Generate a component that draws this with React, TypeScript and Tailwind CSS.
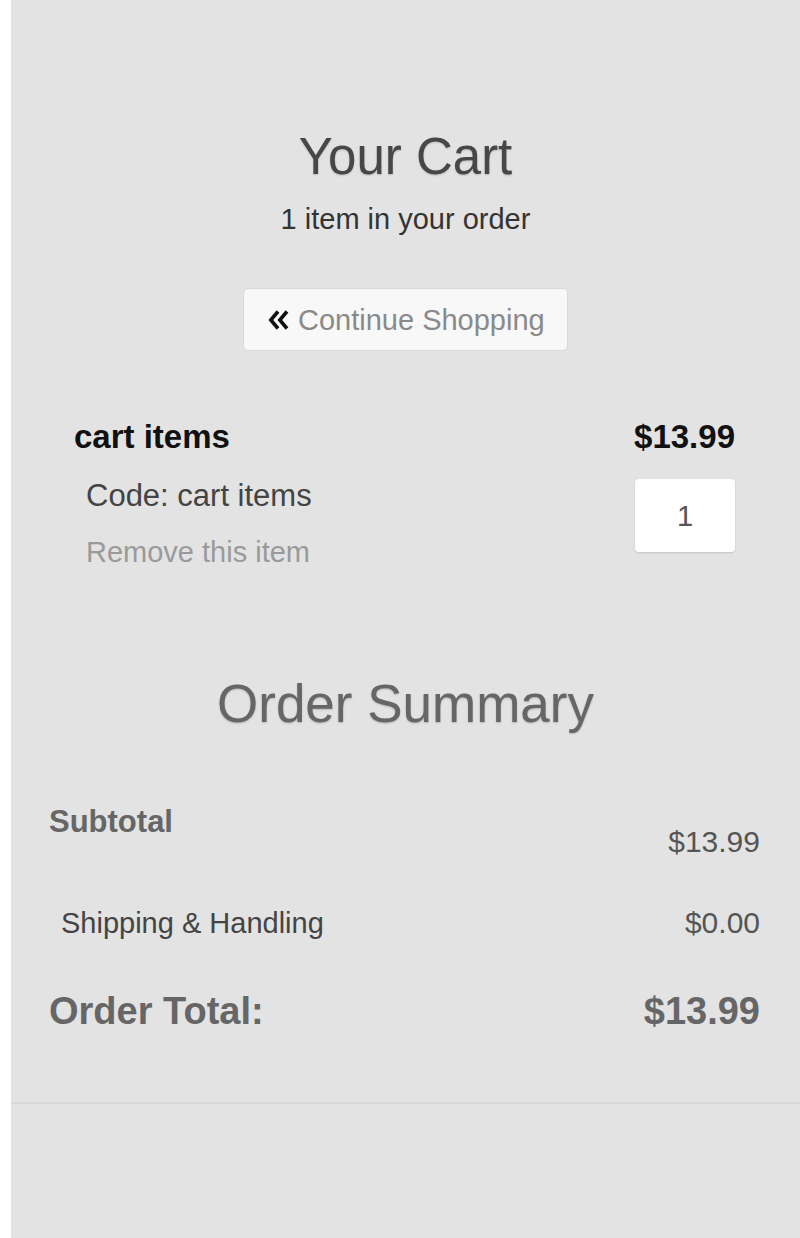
import React from "react";

const font = { fontFamily: '"Liberation Sans", Arial, sans-serif' };

function DoubleLeft() {
  return (
    <svg width="21" height="20" viewBox="0 0 21 20" className="shrink-0">
      <polyline points="10,1.5 2.8,10 10,18.5" fill="none" stroke="#111" strokeWidth="3.6" strokeLinejoin="miter" />
      <polyline points="19,1.5 11.8,10 19,18.5" fill="none" stroke="#111" strokeWidth="3.6" strokeLinejoin="miter" />
    </svg>
  );
}

export default function App() {
  return (
    <div className="min-h-[1238px] bg-white pl-[11px]" style={font}>
      <div className="min-h-[1238px] bg-[#e3e3e3] flex flex-col">
        <div className="pt-[128px] flex flex-col items-center">
          <h1 className="text-[51px] leading-[58px] text-[#474747] [text-shadow:0_1px_2px_rgba(0,0,0,0.18)]">Your Cart</h1>
          <p className="mt-[15px] text-[29px] leading-[36px] text-[#333]">1 item in your order</p>
          <button className="mt-[51px] w-[325px] h-[63px] bg-[#f8f8f8] border border-[#d9d9d9] rounded-[5px] flex items-center pl-[24px] gap-[9px]">
            <DoubleLeft />
            <span className="text-[29px] leading-[36px] text-[#8a8a8a]">Continue Shopping</span>
          </button>
        </div>

        <div className="mt-[67px] pl-[63px] pr-[65px] flex justify-between">
          <div className="flex flex-col">
            <div className="text-[33px] leading-[38px] font-bold text-[#111]">cart items</div>
            <div className="mt-[22px] pl-[12px] text-[31px] leading-[36px] text-[#444]">Code: cart items</div>
            <div className="mt-[20px] pl-[12px] text-[29px] leading-[36px] text-[#9a9a9a]">Remove this item</div>
          </div>
          <div className="flex flex-col items-end">
            <div className="text-[33px] leading-[38px] font-bold text-[#111]">$13.99</div>
            <div className="mt-[23px] w-[100px] h-[73px] bg-white rounded-[4px] shadow-[0_1px_2px_rgba(0,0,0,0.15)] flex items-center justify-center">
              <span className="text-[29px] leading-[36px] text-[#555]">1</span>
            </div>
          </div>
        </div>

        <h2 className="mt-[103px] text-center text-[53px] leading-[62px] text-[#666] [text-shadow:0_1px_2px_rgba(0,0,0,0.2)]">Order Summary</h2>

        <div className="pl-[38px] pr-[40px] flex flex-col">
          <div className="mt-[69px] flex justify-between items-start">
            <div className="text-[31px] leading-[36px] font-bold text-[#666]">Subtotal</div>
            <div className="mt-[20px] text-[30px] leading-[36px] text-[#555]">$13.99</div>
          </div>
          <div className="mt-[45px] flex justify-between items-start">
            <div className="pl-[12px] text-[29px] leading-[36px] text-[#444]">Shipping &amp; Handling</div>
            <div className="text-[30px] leading-[36px] text-[#555]">$0.00</div>
          </div>
          <div className="mt-[48px] flex justify-between items-start">
            <div className="text-[38px] leading-[44px] font-bold text-[#666]">Order Total:</div>
            <div className="text-[38px] leading-[44px] font-bold text-[#666]">$13.99</div>
          </div>
        </div>

        <div className="mt-[69px] h-[2px] bg-[#d9d9d9]" />
      </div>
    </div>
  );
}
